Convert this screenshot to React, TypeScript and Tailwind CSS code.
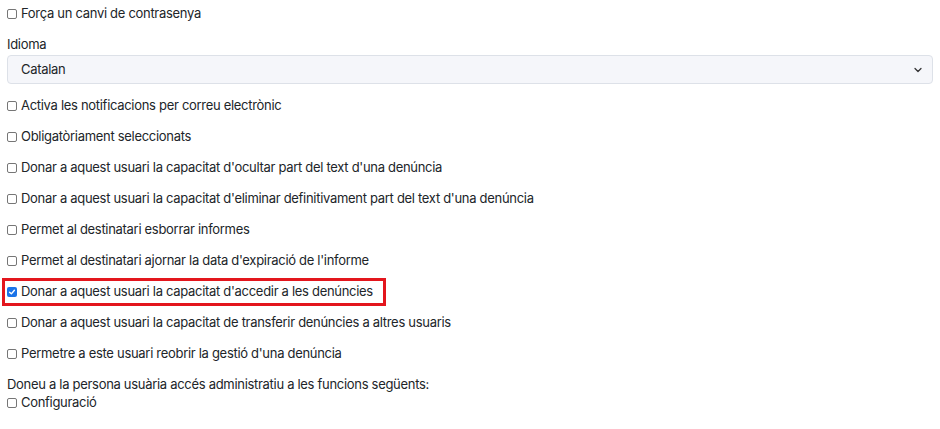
import { ChevronDown } from 'lucide-react';

const rows = [
  'Activa les notificacions per correu electrònic',
  'Obligatòriament seleccionats',
  "Donar a aquest usuari la capacitat d'ocultar part del text d'una denúncia",
  "Donar a aquest usuari la capacitat d'eliminar definitivament part del text d'una denúncia",
  'Permet al destinatari esborrar informes',
  "Permet al destinatari ajornar la data d'expiració de l'informe",
  "Donar a aquest usuari la capacitat d'accedir a les denúncies",
  'Donar a aquest usuari la capacitat de transferir denúncies a altres usuaris',
  "Permetre a este usuari reobrir la gestió d'una denúncia"
];

const Box = ({ checked = false }: { checked?: boolean }) =>
  checked ? (
    <span className="mr-[4px] flex h-[10px] w-[10px] shrink-0 items-center justify-center rounded-[2px] bg-[#1a73e8]">
      <svg viewBox="0 0 10 10" className="h-[8px] w-[8px]">
        <path d="M2 5.2 4.2 7.3 8 2.8" fill="none" stroke="white" strokeWidth="1.8" strokeLinecap="round" strokeLinejoin="round" />
      </svg>
    </span>
  ) : (
    <span className="mr-[4px] h-[10px] w-[10px] shrink-0 rounded-[2px] border border-[#767676] bg-white" />
  );

const App = () => (
  <main
    className="min-h-screen whitespace-nowrap bg-white text-[13px] tracking-[-0.3px] text-[#212529]"
    style={{ fontFamily: 'Inter, "Noto Sans", sans-serif' }}
  >
    <div className="flex h-[28px] items-center pl-[7px]">
      <Box />
      <span>Força un canvi de contrasenya</span>
    </div>

    <div className="mt-[8px] flex h-[18px] items-center pl-[7px]">Idioma</div>
    <div className="mx-[7px] mt-[1px] flex h-[29px] items-center justify-between rounded-[4px] border border-[#dde1e8] bg-[#f5f6fa] pl-[13px] pr-[8px]">
      <span>Catalan</span>
      <ChevronDown size={12} strokeWidth={2.5} className="text-[#333]" />
    </div>

    <div className="mt-[6px] flex flex-col">
      {rows.map((label, i) =>
        i === 6 ? (
          <div key={label} className="flex h-[31px] items-center">
            <div className="ml-[2px] flex h-[28px] w-[384px] items-center border-[3px] border-[#e3161d] pl-[2px]">
              <Box checked />
              <span>{label}</span>
            </div>
          </div>
        ) : (
          <div key={label} className="flex h-[31px] items-center pl-[7px]">
            <Box />
            <span>{label}</span>
          </div>
        )
      )}
    </div>

    <div className="mt-[7px] flex h-[18px] items-center pl-[7px]">
      Doneu a la persona usuària accés administratiu a les funcions següents:
    </div>
    <div className="flex h-[18px] items-center pl-[7px]">
      <Box />
      <span>Configuració</span>
    </div>
  </main>
);

export default App;
